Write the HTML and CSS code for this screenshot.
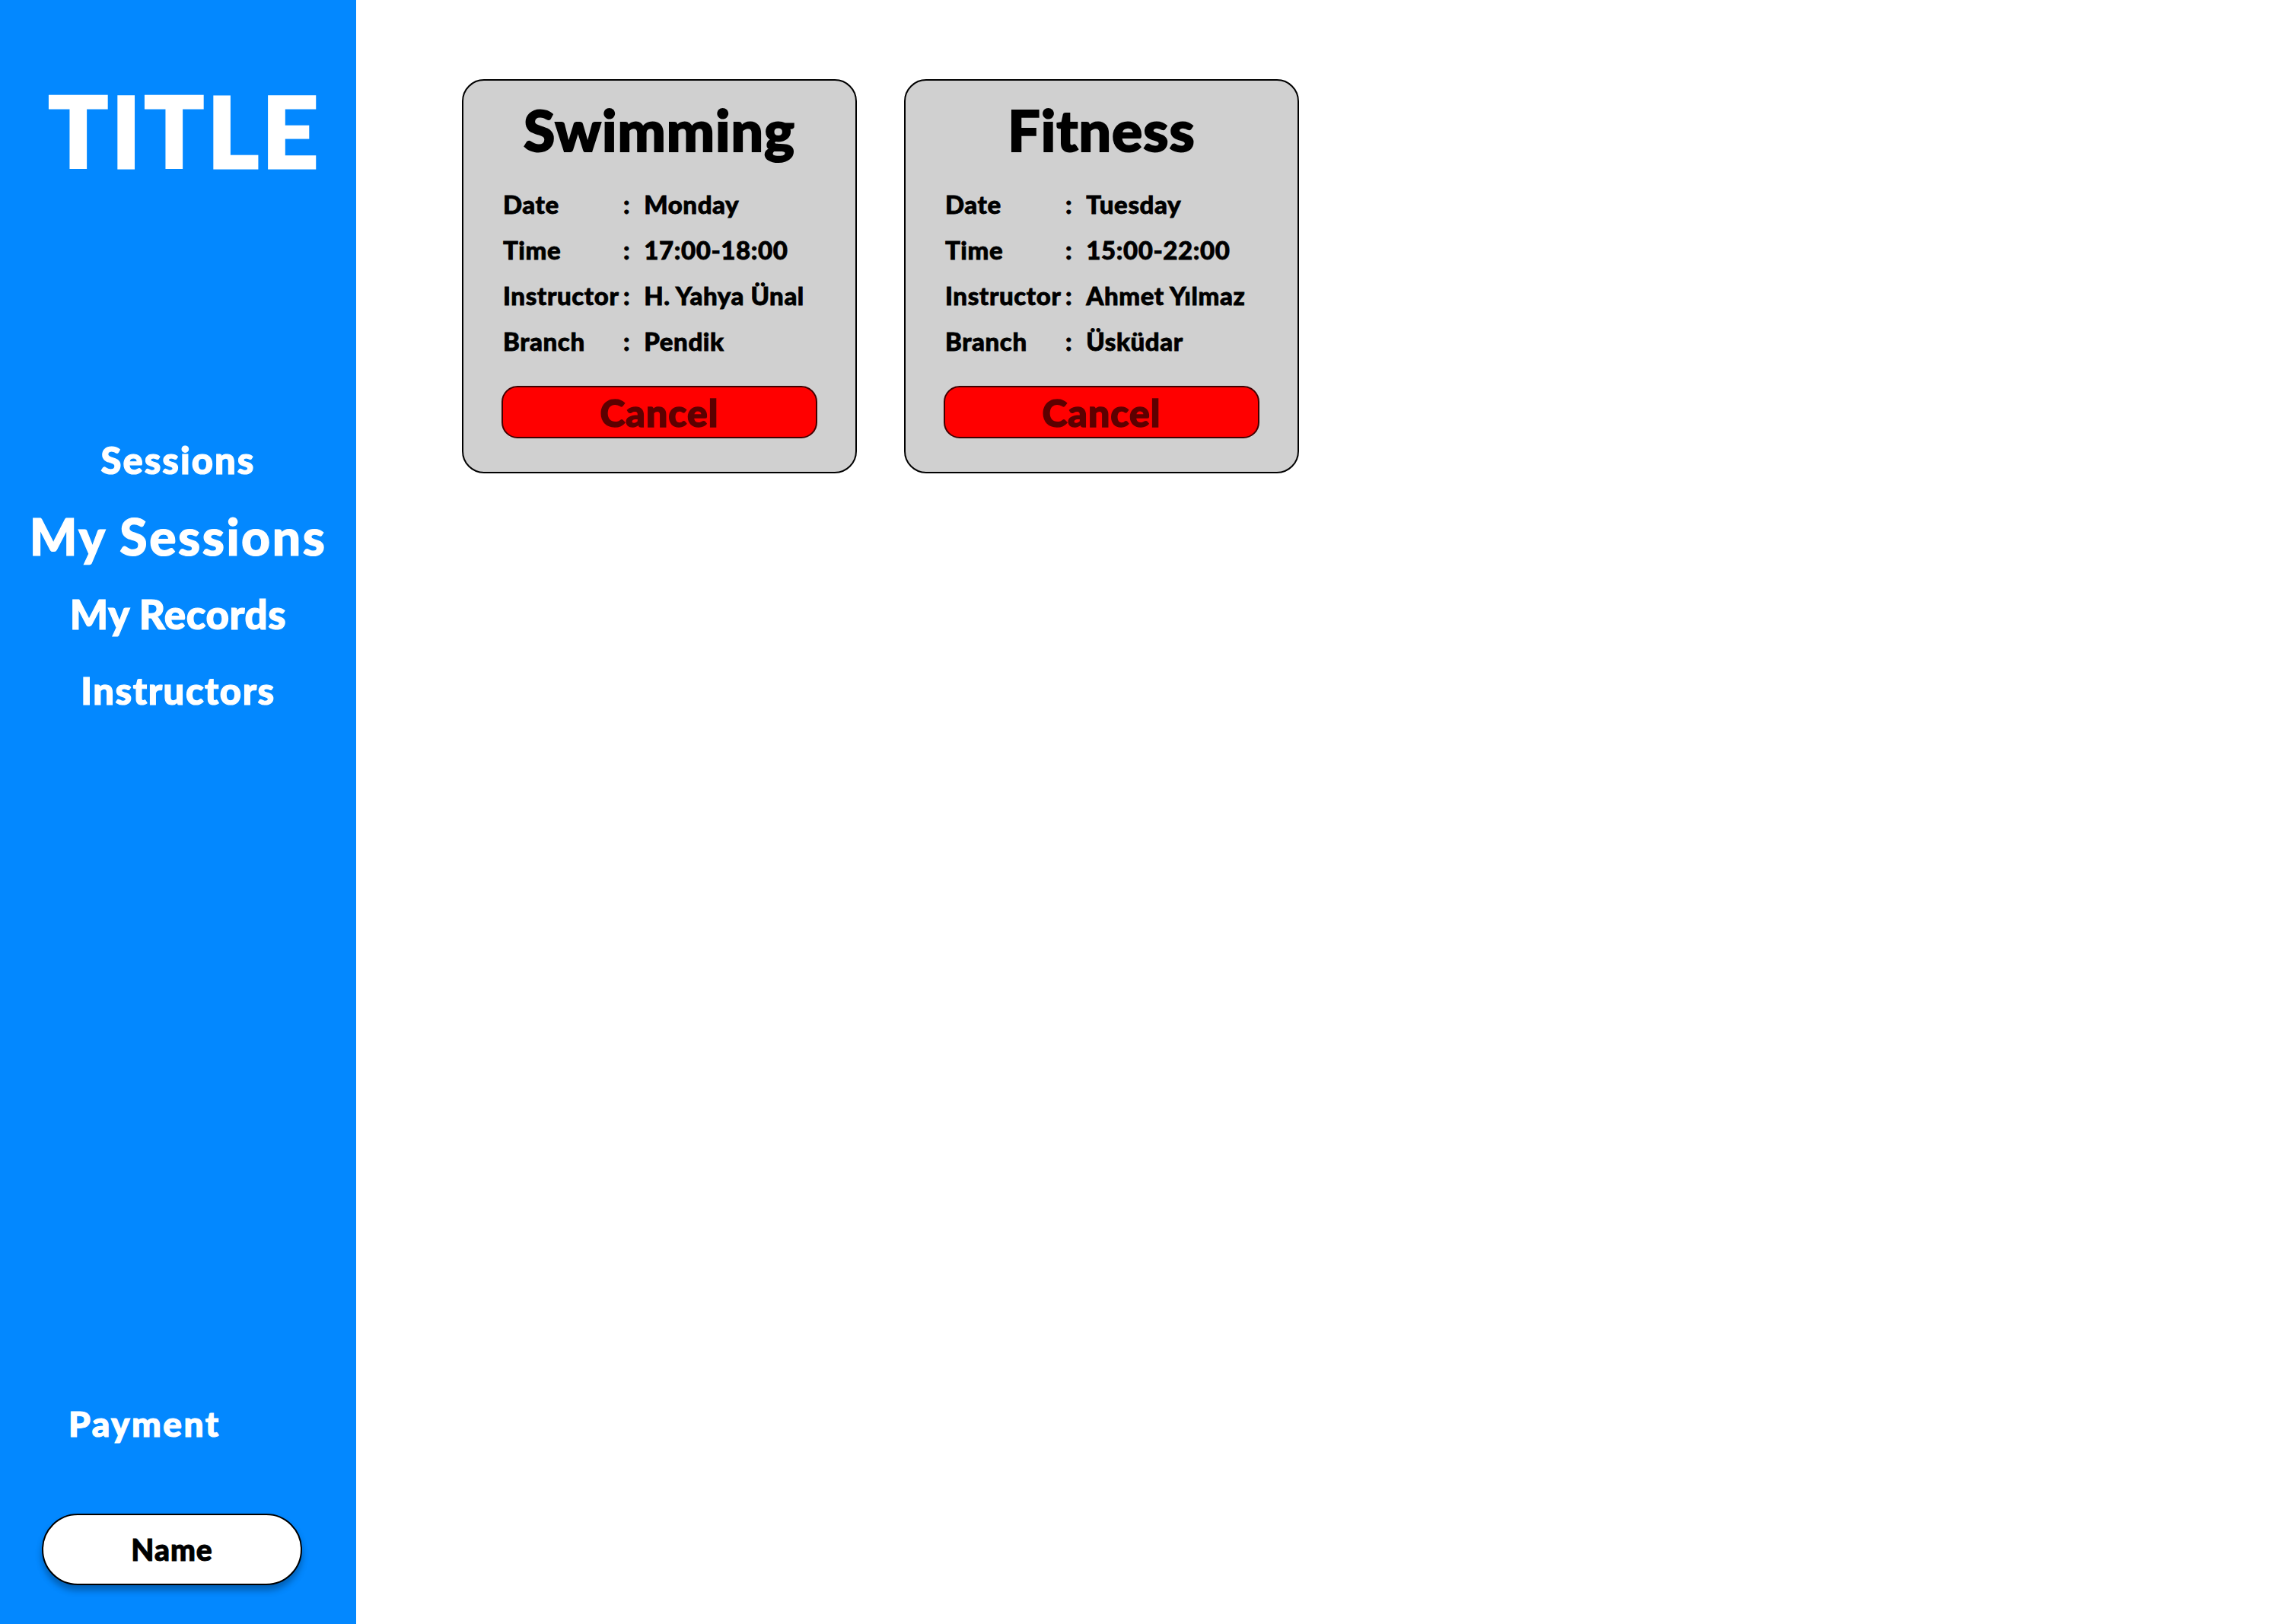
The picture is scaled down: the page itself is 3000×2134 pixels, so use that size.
FILE: index.html
```html
<!DOCTYPE html>
<html lang="en">
<head>
<meta charset="utf-8">
<title>My Sessions</title>
<link rel="stylesheet" href="styles.css">
</head>
<body>
<aside class="sidebar">
  <h1 class="brand">TITLE</h1>
  <nav class="nav">
    <a class="nav-item nav-sm">Sessions</a>
    <a class="nav-item nav-active">My Sessions</a>
    <a class="nav-item nav-md">My Records</a>
    <a class="nav-item nav-sm nav-last">Instructors</a>
  </nav>
  <a class="payment">Payment</a>
  <button class="name-btn">Name</button>
</aside>
<main class="main">
  <section class="card">
    <h2 class="card-title">Swimming</h2>
    <div class="rows">
      <span class="label">Date</span><span class="colon">:</span><span class="value">Monday</span>
      <span class="label">Time</span><span class="colon">:</span><span class="value">17:00-18:00</span>
      <span class="label">Instructor</span><span class="colon">:</span><span class="value">H. Yahya Ünal</span>
      <span class="label">Branch</span><span class="colon">:</span><span class="value">Pendik</span>
    </div>
    <button class="cancel">Cancel</button>
  </section>
  <section class="card">
    <h2 class="card-title">Fitness</h2>
    <div class="rows">
      <span class="label">Date</span><span class="colon">:</span><span class="value">Tuesday</span>
      <span class="label">Time</span><span class="colon">:</span><span class="value">15:00-22:00</span>
      <span class="label">Instructor</span><span class="colon">:</span><span class="value">Ahmet Yılmaz</span>
      <span class="label">Branch</span><span class="colon">:</span><span class="value">Üsküdar</span>
    </div>
    <button class="cancel">Cancel</button>
  </section>
</main>
</body>
</html>
```

FILE: styles.css
```css
* { box-sizing: border-box; }
html, body { margin: 0; padding: 0; }
body {
  display: flex;
  height: 2134px;
  font-family: "Lato", "Noto Sans", sans-serif;
  background: #ffffff;
  color: #000;
}
.sidebar {
  width: 468px;
  flex: 0 0 468px;
  background: #0388ff;
  display: flex;
  flex-direction: column;
  padding: 93px 0 51px 0;
  color: #fff;
}
.brand {
  margin: 0;
  padding-left: 18px;
  font-size: 130px;
  line-height: 1.2;
  font-weight: 900;
  text-align: center;
  letter-spacing: 4px;
  -webkit-text-stroke: 3px #fff;
}
.nav {
  margin-top: 326px;
  display: flex;
  flex-direction: column;
  align-items: center;
  gap: 31px;
}
.nav-item {
  line-height: 1.2;
  font-weight: 900;
  color: #fff;
  -webkit-text-stroke: 1.2px #fff;
}
.nav-sm { font-size: 49px; letter-spacing: 2px; }
.nav-md { font-size: 53px; letter-spacing: 0.5px; }
.nav-active { font-size: 66px; letter-spacing: 2.5px; }
.nav-last { margin-top: 8px; letter-spacing: 1.5px; }
.payment {
  margin-top: auto;
  margin-left: 90px;
  font-size: 46px;
  line-height: 1.2;
  font-weight: 900;
  letter-spacing: 2.5px;
  color: #fff;
  -webkit-text-stroke: 1.2px #fff;
}
.name-btn {
  margin: 91px 0 0 55px;
  width: 342px;
  height: 94px;
  border: 2px solid #000;
  border-radius: 47px;
  background: #fff;
  box-shadow: 0 7px 8px rgba(0, 0, 0, 0.3);
  font-family: inherit;
  font-size: 39px;
  font-weight: 900;
  letter-spacing: 1px;
  -webkit-text-stroke: 1px #000;
  color: #000;
  padding: 0;
}
.main {
  flex: 1;
  display: flex;
  align-items: flex-start;
  gap: 62px;
  padding: 104px 0 0 139px;
}
.card {
  width: 519px;
  background: #d0d0d0;
  border: 2px solid #000;
  border-radius: 29px;
  padding: 19px 50px 44px 50px;
  display: flex;
  flex-direction: column;
}
.card-title {
  margin: 0;
  font-size: 75px;
  line-height: 1.2;
  font-weight: 900;
  text-align: center;
  letter-spacing: 1px;
  -webkit-text-stroke: 2px #000;
}
.rows {
  margin: 24px 0 0 2px;
  display: grid;
  grid-template-columns: 158px max-content 1fr;
  grid-auto-rows: 60px;
  align-items: center;
  font-size: 33px;
  font-weight: 900;
  letter-spacing: 0.6px;
  -webkit-text-stroke: 0.8px #000;
}
.label, .colon, .value { line-height: 1.2; }
.value { margin-left: 18px; }
.cancel {
  margin-top: 28px;
  height: 69px;
  width: 100%;
  background: #ff0000;
  border: 2px solid #400000;
  border-radius: 21px;
  font-family: inherit;
  font-size: 50px;
  font-weight: 900;
  letter-spacing: 1px;
  color: #5c0000;
  -webkit-text-stroke: 1.5px #5c0000;
  padding: 0;
  display: flex;
  align-items: center;
  justify-content: center;
}
```
